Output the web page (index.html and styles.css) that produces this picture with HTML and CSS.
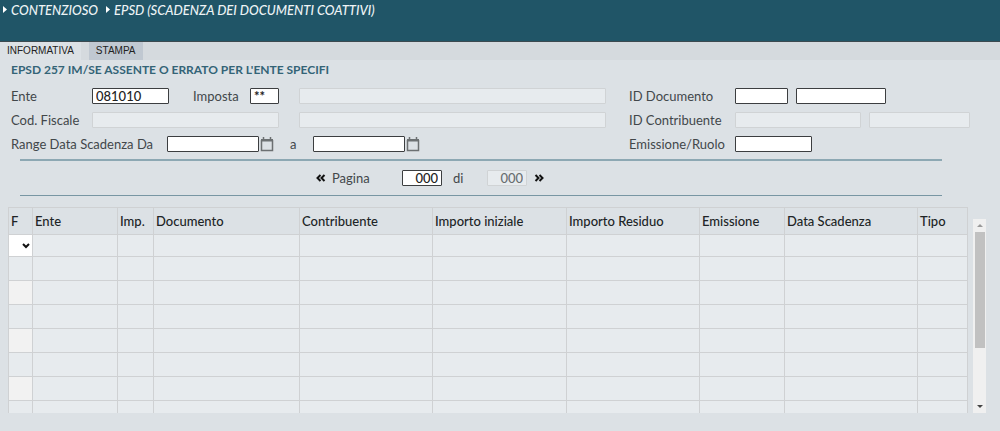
FILE: index.html
```html
<!DOCTYPE html>
<html lang="it">
<head>
<meta charset="utf-8">
<title>EPSD - Scadenza dei documenti coattivi</title>
<link rel="stylesheet" href="styles.css">
</head>
<body>
<header class="topbar">
  <svg class="crumb-arrow" viewBox="0 0 4 7" aria-hidden="true"><path d="M0 0 4 3.5 0 7Z"/></svg>
  <span class="crumb">CONTENZIOSO</span>
  <svg class="crumb-arrow" viewBox="0 0 4 7" aria-hidden="true"><path d="M0 0 4 3.5 0 7Z"/></svg>
  <span class="crumb">EPSD (SCADENZA DEI DOCUMENTI COATTIVI)</span>
</header>
<nav class="tabs">
  <button class="tab tab-active" type="button">INFORMATIVA</button>
  <button class="tab" type="button">STAMPA</button>
</nav>
<main>
  <h1 class="message">EPSD 257 IM/SE ASSENTE O ERRATO PER L'ENTE SPECIFI</h1>
  <form class="filters">
    <div class="row">
      <div class="left">
        <label class="label-s" for="ente">Ente</label>
        <input class="field w-m" id="ente" value="081010">
        <label class="label-imposta" for="imposta">Imposta</label>
        <input class="field w-xs" id="imposta" value="**">
        <input class="field wide" aria-label="Descrizione imposta" disabled>
      </div>
      <div class="right">
        <label class="label-r" for="iddoc">ID Documento</label>
        <input class="field w-doc" id="iddoc">
        <input class="field w-date" aria-label="Numero documento">
      </div>
    </div>
    <div class="row">
      <div class="left">
        <label class="label-s" for="cf">Cod. Fiscale</label>
        <input class="field w-cf" id="cf" disabled>
        <input class="field wide" aria-label="Nominativo" disabled>
      </div>
      <div class="right">
        <label class="label-r" for="idcon">ID Contribuente</label>
        <input class="field w-con" id="idcon" disabled>
        <input class="field w-con2" aria-label="Codice contribuente" disabled>
      </div>
    </div>
    <div class="row">
      <div class="left">
        <label class="label-range" for="da">Range Data Scadenza Da</label>
        <input class="field w-date" id="da">
        <button class="calendar" type="button" aria-label="Calendario da"><svg viewBox="0 0 14 15"><path d="M1.5 3v10.5h11V3M3.5 0v3M10.5 0v3"/><path class="solid" d="M1 2h12v2.5H1Z"/></svg></button>
        <label class="label-a" for="a">a</label>
        <input class="field w-date" id="a">
        <button class="calendar" type="button" aria-label="Calendario a"><svg viewBox="0 0 14 15"><path d="M1.5 3v10.5h11V3M3.5 0v3M10.5 0v3"/><path class="solid" d="M1 2h12v2.5H1Z"/></svg></button>
      </div>
      <div class="right">
        <label class="label-r" for="ruolo">Emissione/Ruolo</label>
        <input class="field w-m" id="ruolo">
      </div>
    </div>
  </form>
  <section class="pager">
    <button class="page-button" type="button" aria-label="Pagina precedente"><svg viewBox="0 0 10 8"><path d="M4.5 1 1.5 4l3 3M8.5 1l-3 3 3 3"/></svg></button>
    <label class="label-page" for="pagina">Pagina</label>
    <input class="field w-page" id="pagina" value="000">
    <label class="label-di" for="totale">di</label>
    <input class="field w-page" id="totale" value="000" disabled>
    <button class="page-button" type="button" aria-label="Pagina successiva"><svg viewBox="0 0 10 8"><path d="M1.5 1l3 3-3 3M5.5 1l3 3-3 3"/></svg></button>
  </section>
  <div class="results">
    <table class="grid">
      <colgroup><col class="c-f"><col class="c-ente"><col class="c-imp"><col class="c-doc"><col class="c-con"><col class="c-ini"><col class="c-res"><col class="c-emi"><col class="c-data"><col class="c-tipo"></colgroup>
      <thead><tr><th>F</th><th>Ente</th><th>Imp.</th><th>Documento</th><th>Contribuente</th><th>Importo iniziale</th><th>Importo Residuo</th><th>Emissione</th><th>Data Scadenza</th><th>Tipo</th></tr></thead>
      <tbody>
        <tr class="first"><td><div class="flag-box"><select class="flag" aria-label="F"><option></option></select><svg class="flag-arrow" viewBox="0 0 8 6" aria-hidden="true"><path d="M1 1l3 3 3-3"/></svg></div></td><td></td><td></td><td></td><td></td><td></td><td></td><td></td><td></td><td></td></tr>
        <tr><td></td><td></td><td></td><td></td><td></td><td></td><td></td><td></td><td></td><td></td></tr>
        <tr><td></td><td></td><td></td><td></td><td></td><td></td><td></td><td></td><td></td><td></td></tr>
        <tr><td></td><td></td><td></td><td></td><td></td><td></td><td></td><td></td><td></td><td></td></tr>
        <tr><td></td><td></td><td></td><td></td><td></td><td></td><td></td><td></td><td></td><td></td></tr>
        <tr><td></td><td></td><td></td><td></td><td></td><td></td><td></td><td></td><td></td><td></td></tr>
        <tr><td></td><td></td><td></td><td></td><td></td><td></td><td></td><td></td><td></td><td></td></tr>
        <tr class="last"><td></td><td></td><td></td><td></td><td></td><td></td><td></td><td></td><td></td><td></td></tr>
      </tbody>
    </table>
    <div class="scrollbar" aria-hidden="true">
      <svg class="scroll-up" viewBox="0 0 6 3"><path d="M0 3 3 0l3 3Z"/></svg>
      <div class="thumb"></div>
      <svg class="scroll-down" viewBox="0 0 6 3"><path d="M0 0h6L3 3Z"/></svg>
    </div>
  </div>
</main>
</body>
</html>
```
FILE: styles.css
```css
* { box-sizing: border-box; }
body {
  margin: 0;
  background: #dce1e5;
  color: #42474a;
  font: 13px/16px Lato, "Open Sans", sans-serif;
}
button { padding: 0; border: 0; background: none; }
svg { display: block; }

.topbar {
  display: flex;
  align-items: flex-start;
  height: 42px;
  padding: 2px 3px;
  border-bottom: 1px solid #3c4a50;
  background: #205567;
  color: #edf3f5;
}
.crumb { margin-right: 8px; font-style: italic; font-weight: 500; }
.crumb-arrow { width: 4px; height: 7px; margin: 4px 4px 0 0; fill: #fff; }

.tabs { display: flex; gap: 8px; height: 18px; background: #d5dade; }
.tab { padding: 0 7px; color: #222; font: 10px/18px "Liberation Sans", sans-serif; }
.tab:not(.tab-active) { background: #c0c8d1; }
.tab-active { background: #dce1e5; }

.message { margin: 0; padding: 2px 11px; color: #346477; font-size: 12px; line-height: 16px; font-weight: 700; }

.filters { padding: 4px 30px 3px 11px; }
.row { display: flex; gap: 23px; height: 24px; align-items: center; }
.left { display: flex; flex: 1; align-items: center; }
.right { display: flex; width: 341px; align-items: center; }
.field {
  height: 16px;
  padding: 0 3px;
  border: 1px solid #3c3e40;
  border-radius: 1px;
  background: #fff;
  color: #222;
  font: 500 13px/14px Lato, "Open Sans", sans-serif;
}
.field:disabled { border-color: #d0d3d5; background: #e7ebee; color: #696e71; }
.label-s { width: 81px; }
.label-imposta { width: 81px; padding-left: 24px; }
.label-r { width: 106px; }
.label-range { width: 156px; }
.label-a { width: 39px; padding-left: 16px; }
.w-xs { width: 29px; font-weight: 700; }
.w-m { width: 77px; }
.w-doc { width: 53px; margin-right: 8px; }
.w-date { width: 92px; }
.w-cf { width: 187px; }
.w-con { width: 126px; margin-right: 8px; }
.w-con2 { width: 101px; }
.wide { flex: 1; min-width: 0; margin-left: 20px; }
.right .w-date { width: 90px; }
.calendar { width: 15px; height: 15px; padding-left: 1px; }
.calendar svg { width: 14px; height: 15px; fill: none; stroke: #6c7072; stroke-width: 1.5; }
.calendar .solid { fill: #6c7072; stroke: none; }

.pager {
  display: flex;
  align-items: center;
  height: 37px;
  margin: 0 58px 0 20px;
  padding-left: 296px;
  border-top: 2px solid #8da8b3;
  border-bottom: 1px solid #7896a3;
}
.page-button svg { width: 10px; height: 8px; fill: none; stroke: #111; stroke-width: 2; }
.label-page { width: 70px; margin-left: 6px; }
.label-di { width: 45px; padding-left: 11px; }
.w-page { width: 40px; text-align: right; }
.w-page + .page-button { margin-left: 7px; }

.results { display: flex; gap: 5px; margin: 11px 14px 0 8px; align-items: stretch; }
.grid { flex: 1; width: 100%; table-layout: fixed; border-collapse: collapse; }
.grid th { height: 27px; padding: 0 2px; background: #dce1e5; color: #202426; font-size: 13px; font-weight: 500; text-align: left; white-space: nowrap; }
.grid th, .grid td { border: 1px solid #cfd1d3; }
.grid td { height: 24px; padding: 0; background: #e7ebee; }
.grid tbody tr:nth-child(odd) td:first-child { background: #f2f2f2; }
.grid .first td { height: 22px; }
.grid .last td { height: 12px; border-bottom: 0; }
.flag-box { position: relative; }
.flag { display: block; width: 100%; height: 21px; border: 0; border-radius: 0; background: #fff; appearance: none; }
.flag-arrow { position: absolute; top: 8px; right: 2px; width: 8px; height: 6px; fill: none; stroke: #111; stroke-width: 2; pointer-events: none; }
.c-f { width: 24px; }
.c-ente { width: 85px; }
.c-imp { width: 36px; }
.c-doc { width: 146px; }
.c-con { width: 133px; }
.c-ini { width: 134px; }
.c-res { width: 133px; }
.c-emi { width: 85px; }
.c-data { width: 133px; }
.c-tipo { width: 50px; }

.scrollbar {
  display: flex;
  flex-direction: column;
  align-items: center;
  width: 13px;
  margin-top: 12px;
  padding: 5px 0;
  background: #f0f0f0;
}
.thumb { width: 10px; height: 116px; margin-top: 5px; background: #c1c1c1; }
.scroll-up, .scroll-down { width: 6px; height: 3px; fill: #999; }
.scroll-down { margin-top: auto; fill: #444; }
```
